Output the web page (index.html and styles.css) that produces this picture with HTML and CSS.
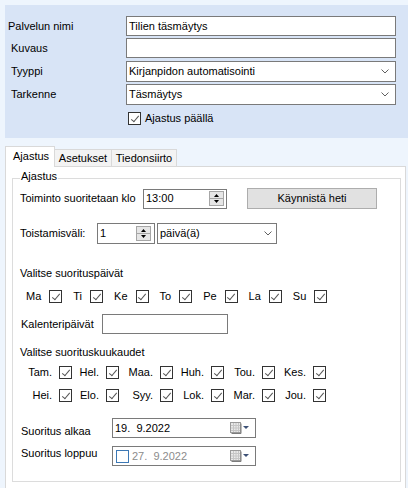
FILE: index.html
```html
<!DOCTYPE html>
<html lang="fi">
<head>
<meta charset="utf-8">
<title>Palvelu</title>
<link rel="stylesheet" href="styles.css">
</head>
<body>
<div class="top">
  <div class="frow">
    <span class="lbl first">Palvelun nimi</span>
    <div class="field">Tilien täsmäytys</div>
  </div>
  <div class="frow r2">
    <span class="lbl">Kuvaus</span>
    <div class="field"></div>
  </div>
  <div class="frow r3">
    <span class="lbl">Tyyppi</span>
    <div class="field combo"><span>Kirjanpidon automatisointi</span><svg class="chev" width="8" height="5" viewBox="0 0 8 5"><polyline points="0.5,0.5 4,4 7.5,0.5" fill="none" stroke="#606060" stroke-width="1"/></svg></div>
  </div>
  <div class="frow r4">
    <span class="lbl">Tarkenne</span>
    <div class="field combo"><span>Täsmäytys</span><svg class="chev" width="8" height="5" viewBox="0 0 8 5"><polyline points="0.5,0.5 4,4 7.5,0.5" fill="none" stroke="#606060" stroke-width="1"/></svg></div>
  </div>
  <div class="checkrow"><span class="cb on"></span><span>Ajastus päällä</span></div>
</div>

<div class="tabs">
  <div class="tab sel">Ajastus</div>
  <div class="tab t2">Asetukset</div>
  <div class="tab t3">Tiedonsiirto</div>
</div>
<div class="page">
  <fieldset class="group">
    <legend>Ajastus</legend>
    <div class="row row1">
      <span class="l-time">Toiminto suoritetaan klo</span>
      <div class="field time"><span>13:00</span>
        <svg class="spin" width="15" height="15" viewBox="0 0 15 15"><rect x="0.5" y="0.5" width="14" height="14" fill="#e6e6e6" stroke="#a6a6a6"/><line x1="1" y1="7.5" x2="14" y2="7.5" stroke="#a6a6a6"/><polygon points="5,6 10,6 7.5,3" fill="#000"/><polygon points="5,9 10,9 7.5,12" fill="#000"/></svg>
      </div>
      <div class="btn">Käynnistä heti</div>
    </div>
    <div class="row row2">
      <span class="l-rep">Toistamisväli:</span>
      <div class="field num"><span>1</span>
        <svg class="spin" width="15" height="15" viewBox="0 0 15 15"><rect x="0.5" y="0.5" width="14" height="14" fill="#e6e6e6" stroke="#a6a6a6"/><line x1="1" y1="7.5" x2="14" y2="7.5" stroke="#a6a6a6"/><polygon points="5,6 10,6 7.5,3" fill="#000"/><polygon points="5,9 10,9 7.5,12" fill="#000"/></svg>
      </div>
      <div class="field combo unit"><span>päivä(ä)</span><svg class="chev" width="8" height="5" viewBox="0 0 8 5"><polyline points="0.5,0.5 4,4 7.5,0.5" fill="none" stroke="#606060" stroke-width="1"/></svg></div>
    </div>
    <div class="heading h-days">Valitse suorituspäivät</div>
    <div class="days">
      <span class="d">Ma</span><span class="cb on"></span>
      <span class="d">Ti</span><span class="cb on"></span>
      <span class="d">Ke</span><span class="cb on"></span>
      <span class="d">To</span><span class="cb on"></span>
      <span class="d">Pe</span><span class="cb on"></span>
      <span class="d">La</span><span class="cb on"></span>
      <span class="d">Su</span><span class="cb on"></span>
    </div>
    <div class="row cal">
      <span class="l-cal">Kalenteripäivät</span>
      <div class="field calf"></div>
    </div>
    <div class="heading h-months">Valitse suorituskuukaudet</div>
    <div class="months">
      <span class="m">Tam.</span><span class="cb on"></span>
      <span class="m">Hel.</span><span class="cb on"></span>
      <span class="m">Maa.</span><span class="cb on"></span>
      <span class="m">Huh.</span><span class="cb on"></span>
      <span class="m">Tou.</span><span class="cb on"></span>
      <span class="m">Kes.</span><span class="cb on"></span>
      <span class="m">Hei.</span><span class="cb on"></span>
      <span class="m">Elo.</span><span class="cb on"></span>
      <span class="m">Syy.</span><span class="cb on"></span>
      <span class="m">Lok.</span><span class="cb on"></span>
      <span class="m">Mar.</span><span class="cb on"></span>
      <span class="m">Jou.</span><span class="cb on"></span>
    </div>
    <div class="row date d1">
      <span class="l-date down">Suoritus alkaa</span>
      <div class="field datef"><span class="dt">19.  9.2022</span>
        <svg class="calico" width="21" height="12" viewBox="0 0 21 12"><rect x="1.5" y="0.5" width="10" height="10" fill="#e9e9e9" stroke="#9a9a9a"/><path d="M4.5 1v9M7 1v9M9.5 1v9M2 3.5h9M2 6h9M2 8.5h9" stroke="#c6c6c6" stroke-width="1"/><path d="M12 1.5v10H2.5" fill="none" stroke="#7c7c7c"/><polygon points="14,4 20,4 17,7" fill="#3d5176"/></svg>
      </div>
    </div>
    <div class="row date d2">
      <span class="l-date up">Suoritus loppuu</span>
      <div class="field datef"><span class="cb blue"></span><span class="dt gray">27.  9.2022</span>
        <svg class="calico" width="21" height="12" viewBox="0 0 21 12"><rect x="1.5" y="0.5" width="10" height="10" fill="#e9e9e9" stroke="#9a9a9a"/><path d="M4.5 1v9M7 1v9M9.5 1v9M2 3.5h9M2 6h9M2 8.5h9" stroke="#c6c6c6" stroke-width="1"/><path d="M12 1.5v10H2.5" fill="none" stroke="#7c7c7c"/><polygon points="14,4 20,4 17,7" fill="#3d5176"/></svg>
      </div>
    </div>
  </fieldset>
</div>
</body>
</html>
```
FILE: styles.css
```css
* { box-sizing: border-box; }
html, body { margin: 0; padding: 0; }
body {
  width: 408px;
  height: 488px;
  overflow: hidden;
  background: #eef5fd;
  font-family: "Liberation Sans", Arial, sans-serif;
  font-size: 11px;
  line-height: 13px;
  color: #000;
}

/* top panel */
.top {
  margin: 5px 0 0 5px;
  height: 133px;
  background: #d8e4f6;
  padding-top: 11px;
}
.frow { display: flex; align-items: center; }
.frow .lbl { width: 121px; padding-left: 6px; }
.frow .lbl.first { padding-left: 3px; }
.r2 { margin-top: 2px; }
.r3 { margin-top: 3px; }
.r4 { margin-top: 2px; }

.field {
  display: flex;
  align-items: center;
  width: 270px;
  height: 20px;
  border: 1px solid #7a7a7a;
  background: #fff;
  padding-left: 2px;
  white-space: nowrap;
}
.combo { height: 21px; justify-content: space-between; padding-right: 6px; }
.chev { display: block; }

.checkrow {
  display: flex;
  align-items: center;
  margin: 7px 0 0 123px;
  gap: 4px;
}

.cb {
  position: relative;
  display: inline-block;
  flex: none;
  width: 13px;
  height: 13px;
  border: 1px solid #333;
  background: #fff;
}
.cb.on::after {
  content: "";
  position: absolute;
  left: 3.5px;
  top: 0.5px;
  width: 3px;
  height: 7px;
  border: solid #555;
  border-width: 0 1px 1px 0;
  transform: rotate(40deg);
}
.cb.blue { border-color: #3c78b5; width: 13px; height: 13px; }

/* tabs */
.tabs {
  position: relative;
  z-index: 1;
  display: flex;
  align-items: flex-end;
  height: 21px;
  margin: 8px 0 -1px 5px;
}
.tab {
  height: 17px;
  margin-bottom: 1px;
  border: 1px solid #d9d9d9;
  border-bottom: none;
  background: #f3f3f3;
  display: flex;
  align-items: center;
  justify-content: center;
}
.tab.sel {
  height: 21px;
  margin-bottom: 0;
  width: 50px;
  background: #fff;
  justify-content: flex-start;
  padding-left: 7px;
  padding-bottom: 1px;
}
.tab.t2 { width: 57px; border-left: none; }
.tab.t3 { width: 65px; border-left: none; }

.page {
  margin-left: 5px;
  width: 401px;
  height: 330px;
  background: #fff;
  border: 1px solid #d9d9d9;
}

.group {
  margin: 3px 4px 0 6px;
  padding: 0 0 15px 7px;
  border: 1px solid #dcdcdc;
  min-inline-size: 0;
}
.group legend {
  padding: 0 1px 3px 1px;
  line-height: 13px;
}

.row { display: flex; align-items: center; }
.row1 { margin-top: 2px; height: 21px; }
.l-time { width: 123px; }
.time { width: 84px; padding-left: 2px; justify-content: space-between; padding-right: 2px; }
.spin { display: block; }
.btn {
  margin-left: 20px;
  width: 130px;
  height: 21px;
  background: #e1e1e1;
  border: 1px solid #adadad;
  display: flex;
  align-items: center;
  justify-content: center;
}

.row2 { margin-top: 14px; height: 21px; }
.l-rep { width: 77px; }
.num { width: 58px; height: 21px; justify-content: space-between; padding-right: 3px; }
.unit { width: 120px; margin-left: 2px; padding-left: 2px; padding-right: 4px; }

.heading { height: 13px; }
.h-days { margin-top: 23px; }
.days {
  display: flex;
  align-items: center;
  height: 13px;
  margin-top: 10px;
  padding-left: 6px;
}
.days .d { margin-right: 8px; }
.days .cb { margin-right: 11px; }

.cal { margin-top: 11px; }
.l-cal { width: 82px; padding-left: 1px; }
.calf { width: 126px; }

.h-months { margin-top: 12px; }
.months {
  display: grid;
  grid-template-columns: 39px 13px 34px 13px 41px 13px 38px 13px 38px 13px 38px 13px;
  grid-auto-rows: 13px;
  row-gap: 10px;
  margin-top: 7px;
  align-items: center;
}
.months .m { text-align: right; padding-right: 7px; white-space: nowrap; }

.date { height: 20px; }
.d1 { margin-top: 16px; }
.d2 { margin-top: 8px; }
.l-date { width: 92px; padding-left: 1px; }
.l-date.down { padding-top: 6px; }
.l-date.up { padding-bottom: 6px; }
.datef { width: 144px; padding-left: 2px; padding-right: 5px; }
.dt { white-space: pre; }
.dt.gray { color: #8c8c8c; margin-left: 3px; }
.datef .cb { margin-left: 1px; }
.calico { display: block; margin-left: auto; }
```
